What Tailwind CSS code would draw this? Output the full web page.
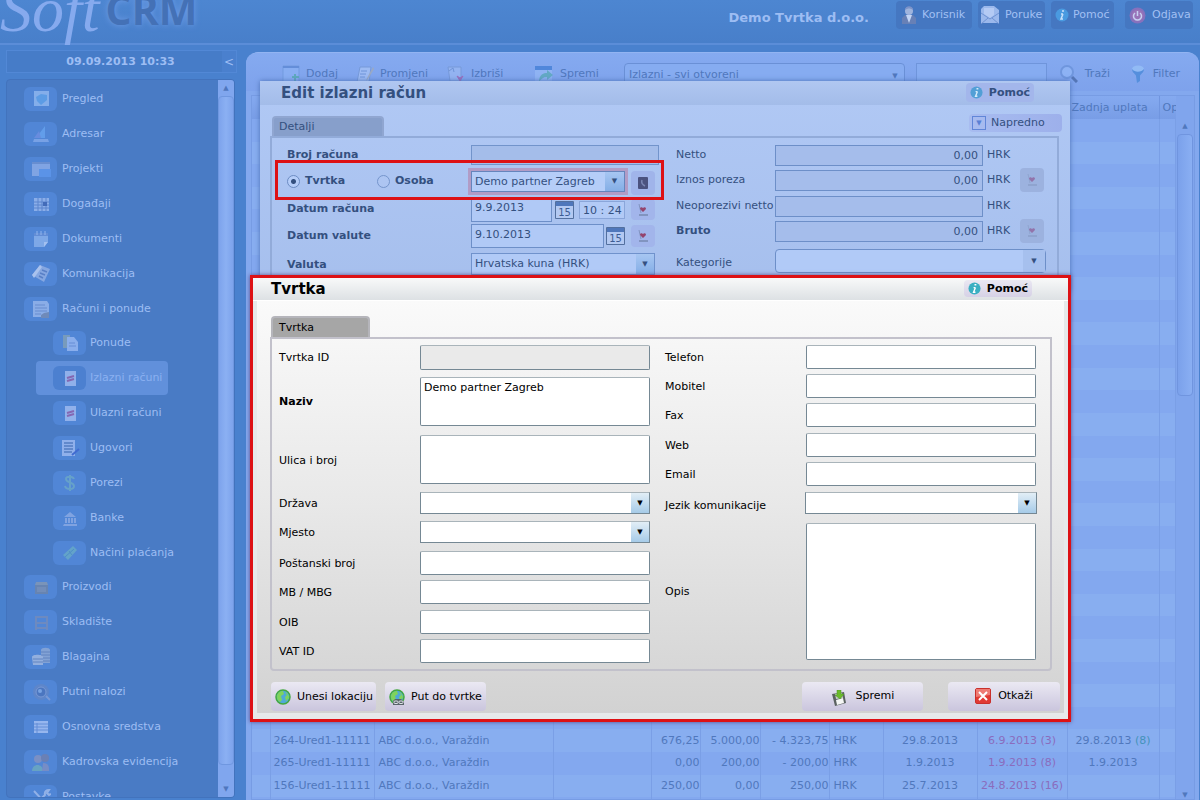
<!DOCTYPE html>
<html lang="hr">
<head>
<meta charset="utf-8">
<title>SoftCRM</title>
<script src="https://cdn.jsdelivr.net/npm/@tailwindcss/browser@4"></script>
</head>
<body class="relative flex h-screen flex-col overflow-hidden bg-[#4981ce] font-['DejaVu_Sans',sans-serif] text-[11px] leading-4">

<header class="flex h-[45px] shrink-0 items-start justify-between border-b-2 border-[#5b8dd8] bg-linear-to-b from-[#4d86d1] to-[#487fca] pr-[7px]">
  <a href="#" class="-mt-5 flex items-start no-underline">
    <span class="font-['Liberation_Serif',serif] text-[64px] leading-[60px] text-[#86aaee] italic">Soft</span>
    <span class="mt-[6px] ml-[6px] font-['Open_Sans',sans-serif] text-[41px] leading-[46px] font-bold text-[#4471b6] [text-shadow:0_0_6px_#6f9ce6]">CRM</span>
  </a>
  <div class="flex items-start">
    <strong class="mt-2 mr-[27px] text-[13px] leading-5 text-[#9dbdf3]">Demo Tvrtka d.o.o.</strong>
    <nav class="mt-px flex gap-[6px] text-[#a2c0f3]">
      <button class="flex h-7 w-[76px] items-center gap-[3px] rounded bg-[#4577c1] pl-[3px]">
        <svg class="size-5" viewBox="0 0 20 20"><path d="M3 19V13l3-3h8l3 3v6z" fill="#6780b6"/><path d="M7 10l3 8 3-8z" fill="#c3d5f5"/><circle cx="10" cy="6" r="4" fill="#9fb4dd"/><path d="M6 5c0-5 8-5 8 0-3-2-5-2-8 0z" fill="#7d93c8"/></svg>Korisnik
      </button>
      <button class="flex h-7 w-[67px] items-center gap-[6px] rounded bg-[#4577c1] pl-[3px]">
        <svg class="h-[18px] w-[18px]" viewBox="0 0 18 18"><path d="M0 3L3 0h10l5 4v13H0z" fill="#9bb8ec"/><path d="M3 2h10v7l-4 3-6-4z" fill="#b4caf4"/><path d="M0 7l9 6 9-6M0 18l7-6M18 18l-7-6" fill="none" stroke="#6f93d3"/></svg>Poruke
      </button>
      <button class="flex h-7 w-[63px] items-center gap-1 rounded bg-[#4577c1] pl-1">
        <svg class="h-[14px] w-[14px]" viewBox="0 0 14 14"><circle cx="7" cy="7" r="6.5" fill="#4a9ae0"/><path d="M7 3h2M8 6l-2 5h2M6 6h2" stroke="#c9e0fa" stroke-width="1.5" fill="none"/></svg>Pomoć
      </button>
      <button class="ml-[5px] flex h-7 w-[68px] items-center gap-[6px] rounded bg-[#4577c1] pl-1">
        <svg class="h-[17px] w-[17px]" viewBox="0 0 17 17"><circle cx="8.500" cy="8.500" r="8" fill="#8671bd"/><circle cx="8.500" cy="8.500" r="6" fill="#9873b8"/><path d="M6 6a4 4 0 1 0 5 0M8.500 4v5" stroke="#c6d0f2" stroke-width="1.500" fill="none"/></svg>Odjava
      </button>
    </nav>
  </div>
</header>

<div class="flex min-h-0 flex-1 gap-[9px] pt-[5px] pl-[6px]">
  <aside class="flex w-[231px] shrink-0 flex-col text-[#9dbdf3]">
    <div class="flex h-[23px] border border-[#5288d6] bg-[#467cc8]">
      <time class="flex-1 pl-3 text-center leading-[22px] font-bold">09.09.2013 10:33</time>
      <button class="w-[14px] bg-[#4a80ce] text-xs">&lt;</button>
    </div>
    <div class="mt-[6px] mr-[2px] mb-[2px] flex min-h-0 flex-1 overflow-hidden rounded border border-[#4273bd] bg-[#497bc5]">
      <ul id="menu" class="grid h-[734px] flex-1 auto-rows-fr pt-[2px]"></ul>
      <div class="flex w-4 flex-col justify-between bg-[#80a6ee] text-center text-[7px] leading-4 text-[#4f76bd]">
        <span>▲</span>
        <div class="w-full flex-1 rounded-sm border border-[#6f97e0] bg-linear-to-r from-[#7da3ec] via-[#8bb0f3] to-[#7da3ec]"></div>
        <span class="h-8 pt-4">▼</span>
      </div>
    </div>
  </aside>

  <main class="mt-[2px] mr-px flex min-w-0 flex-1 flex-col overflow-hidden rounded-t-xl border-t border-[#92b4f2] bg-[#83a8ee] text-[#5078bd]">
    <div class="flex h-[38px] items-center bg-linear-to-b from-[#85aaf0] to-[#7ea2ec] pl-9">
      <button class="mt-1 flex w-[74px] items-center gap-[6px]"><svg class="size-[18px]" viewBox="0 0 18 18"><path d="M1 1h16v16H1z" fill="#88aef2" stroke="#739bdf"/><path d="M1 1h16v2H1z" fill="#648ed9"/><path d="M13 9v7M10 12h7" stroke="#5ea9bd" stroke-width="2"/></svg>Dodaj</button>
      <button class="mt-1 flex w-[90px] items-center gap-[6px]"><svg class="size-[18px]" viewBox="0 0 18 18"><path d="M4 2h11l-2 15H1z" fill="#9dbbf3" stroke="#7699d9"/><path d="M5 6h6M4 9h6M4 12h5" stroke="#6f94d8"/><path d="M17 2l-6 11-1 3 2-2 6-10z" fill="#9aa9c4"/></svg>Promjeni</button>
      <button class="mt-1 flex w-[89px] items-center gap-[7px]"><svg class="size-[18px]" viewBox="0 0 18 18"><path d="M2 2h13v14H4z" fill="#93b3f1" stroke="#7699d9"/><path d="M3 6l4-3 1 4" fill="none" stroke="#6f94d8"/><path d="M11 11l3 2 3-2-3 5z" fill="#9a6fbd" stroke="#9a6fbd"/></svg>Izbriši</button>
      <button class="mt-1 flex w-[89px] items-center gap-[7px]"><svg class="size-[18px]" viewBox="0 0 18 18"><path d="M0 1h17v16H0z" fill="#8fb3f3"/><path d="M0 1h17v4H0z" fill="#5087db"/><path d="M4 17c0-8 5-9 8-9V5l6 5-6 5v-3c-4 0-6 2-8 5z" fill="#63a9c4"/></svg>Spremi</button>
      <div class="relative mt-[6px] h-6 flex-1 rounded-t border border-[#6a90d6] bg-[#86acf1]">
        <select aria-label="Pogled" class="h-full w-full appearance-none bg-transparent px-1 text-[#5078bd]"><option>Izlazni - svi otvoreni</option></select>
        <span class="pointer-events-none absolute top-1 right-[6px] text-[7px]">▼</span>
      </div>
      <input aria-label="Traži" class="mt-[6px] ml-[11px] h-6 w-[131px] border border-[#6f95db] bg-[#86acf1]">
      <button class="mt-[3px] ml-[13px] flex w-[66px] items-center gap-[7px]"><svg class="size-[18px]" viewBox="0 0 18 18"><circle cx="7" cy="7" r="6" fill="#8db2f4" stroke="#6f96dd" stroke-width="2"/><path d="M12 12l5 5" stroke="#5576b6" stroke-width="3"/></svg>Traži</button>
      <button class="mt-[3px] mr-[19px] ml-[5px] flex items-center gap-2"><svg class="h-[18px] w-[14px]" viewBox="0 0 14 18"><ellipse cx="7" cy="4" rx="6" ry="3.500" fill="#92bbf5"/><path d="M1 4c0 4 4 5 4 7l1 7 3-2V11c0-2 4-3 4-7-2 3-9 4-12 0z" fill="#558fdd"/></svg>Filter</button>
    </div>
    <div class="mt-1 mr-1 ml-[5px] flex min-h-0 flex-1 overflow-hidden border border-[#779ce4]">
      <div class="min-w-0 flex-1 overflow-hidden">
        <table class="h-[724px] w-full table-fixed border-collapse whitespace-nowrap">
          <colgroup><col class="w-[18px]"><col class="w-[104px]"><col class="w-[179px]"><col class="w-[98px]"><col class="w-[49px]"><col class="w-[60px]"><col class="w-[69px]"><col class="w-[54px]"><col class="w-[94px]"><col class="w-[90px]"><col class="w-[92px]"><col></colgroup>
          <thead><tr class="h-[23px] bg-linear-to-b from-[#85aaf0] to-[#789de6] text-left"><th></th><th></th><th></th><th></th><th></th><th></th><th></th><th></th><th></th><th></th><th class="border-x border-[#7095df] p-0 pl-1 font-normal">Zadnja uplata</th><th class="overflow-hidden p-0 pl-[3px] font-normal">Op</th></tr></thead>
          <tbody id="rows"></tbody>
        </table>
      </div>
      <div class="flex w-[18px] flex-col bg-[#80a5ed] pt-[22px] text-center text-[7px]">
        <span class="leading-4">▲</span>
        <div class="mx-px h-[262px] rounded-sm border border-[#7095df] bg-linear-to-r from-[#7ba1eb] to-[#8aaff3]"></div>
        <span class="mt-auto leading-2">▼</span>
      </div>
    </div>
  </main>
</div>

<section aria-label="Edit izlazni račun" class="absolute top-[81px] left-[260px] h-[210px] w-[810px] bg-linear-to-b from-[#b1c9f5] to-[#a6bfed] text-[#34507f] shadow-[0_0_5px_#4c70b4]">
  <div class="flex h-6 items-center justify-between bg-linear-to-b from-[#b0c7f1] to-[#a3bce9] pr-9 pl-[21px]">
    <h1 class="text-[15px] leading-6 font-bold">Edit izlazni račun</h1>
    <button class="mb-px flex h-[19px] items-center gap-[6px] rounded-sm bg-[#a3b6eb] px-1 font-bold"><svg class="size-[13px]" viewBox="0 0 14 14"><circle cx="7" cy="7" r="6.5" fill="#529fd6"/><path d="M7 3h2M8 6l-2 5h2M6 6h2" stroke="#d5ebfa" stroke-width="1.5" fill="none"/></svg>Pomoć</button>
  </div>
  <div class="flex items-end justify-between pt-[9px] pr-2 pl-3">
    <button class="h-5 w-[112px] rounded-t border-2 border-b-0 border-[#90a6d1] bg-[#879fcb] pl-[5px] text-left">Detalji</button>
    <button class="mb-1 flex h-[18px] w-[93px] items-center gap-[5px] rounded-sm bg-linear-to-r from-[#a8bcf0] to-[#9db0eb] pl-[3px]"><span class="flex size-[14px] items-center justify-center border border-[#6186d8] text-[7px] text-[#5a80d5]">▼</span>Napredno</button>
  </div>
  <div class="mr-[11px] ml-[10px] flex h-[156px] border-2 border-[#92abd9] pt-[7px]">
    <div class="w-[389px] pl-[15px]">
      <div class="flex h-[26px] items-start"><label for="broj" class="w-[184px] pt-[2px] font-bold">Broj računa</label><input id="broj" disabled class="h-5 w-[188px] border border-[#7294cb] bg-[#a4bdea]"></div>
      <div class="flex h-[26px] items-start">
        <div class="flex w-[184px] items-center pt-[2px] font-bold">
          <label class="flex w-[90px] items-center gap-[5px]"><input type="radio" name="vrsta" checked class="size-[13px] appearance-none rounded-full border border-[#6c8cc3] bg-[radial-gradient(circle,#34507f_2px,#b5cdf8_3px)]">Tvrtka</label>
          <label class="flex items-center gap-[5px]"><input type="radio" name="vrsta" class="size-[13px] appearance-none rounded-full border border-[#7595cc] bg-[#adc5f2]">Osoba</label>
        </div>
        <div class="relative h-[21px] w-[154px] border border-[#6585bd] bg-[#b5cdf8] shadow-[0_0_0_3px_#b19cc6]">
          <select aria-label="Partner" class="h-full w-full appearance-none pl-[3px]"><option>Demo partner Zagreb</option></select>
          <span class="pointer-events-none absolute inset-y-0 right-0 w-[19px] bg-linear-to-b from-[#a7c6f2] to-[#84aee6] text-center text-[7px] leading-[19px]">▼</span>
        </div>
        <button aria-label="Imenik" class="ml-[6px] flex h-6 w-6 items-center justify-center rounded-sm bg-[#a0b4ea]"><svg class="size-3" viewBox="0 0 12 12"><rect x="1" width="10" height="12" rx="1" fill="#4b527f"/><path d="M5 3c-1 3 1 5 3 6" stroke="#7b86b4" fill="none" stroke-width="1.500"/></svg></button>
      </div>
      <div class="flex h-[27px] items-start">
        <label for="datum" class="w-[184px] pt-1 font-bold">Datum računa</label>
        <input id="datum" value="9.9.2013" class="h-[25px] w-[81px] border border-[#6d8fc8] bg-[#b0c9f6] pb-1 pl-[3px]">
        <svg class="mt-1 ml-[3px] h-[18px] w-[19px]" viewBox="0 0 19 18"><path d="M.5.5h18v17H.5z" fill="#b3c9f2" stroke="#53709f"/><path d="M1 1h17v4H1z" fill="#4f77bb"/><text x="9.500" y="15" font-size="10" text-anchor="middle" fill="#3d5c94">15</text></svg>
        <input aria-label="Vrijeme" value="10 : 24" class="mt-1 ml-[5px] h-[18px] w-[46px] border border-[#8aa6da] bg-[#b2caf6] pl-[3px]">
        <button aria-label="Zabilježi datum" class="mt-[2px] ml-[6px] flex h-[21px] w-6 items-center justify-center rounded-sm bg-[#a2b5eb]"><svg class="size-3" viewBox="0 0 12 12"><path d="M2 0l2 9" stroke="#8194c0"/><path d="M6 8L3 5c0-2 2-2 3-1 1-1 3-1 3 1z" fill="#94446f"/><path d="M2 11h9" stroke="#8194c0" stroke-width="2"/></svg></button>
      </div>
      <div class="flex h-[29px] items-start">
        <label for="valute" class="w-[184px] pt-1 font-bold">Datum valute</label>
        <input id="valute" value="9.10.2013" class="h-6 w-[133px] border border-[#6d8fc8] bg-[#b0c9f6] pb-1 pl-[3px]">
        <svg class="mt-[3px] ml-[2px] h-[18px] w-[19px]" viewBox="0 0 19 18"><path d="M.5.5h18v17H.5z" fill="#b3c9f2" stroke="#53709f"/><path d="M1 1h17v4H1z" fill="#4f77bb"/><text x="9.500" y="15" font-size="10" text-anchor="middle" fill="#3d5c94">15</text></svg>
        <button aria-label="Zabilježi valutu" class="mt-px ml-[6px] flex h-[22px] w-6 items-center justify-center rounded-sm bg-[#a2b5eb]"><svg class="size-3" viewBox="0 0 12 12"><path d="M2 0l2 9" stroke="#8194c0"/><path d="M6 8L3 5c0-2 2-2 3-1 1-1 3-1 3 1z" fill="#94446f"/><path d="M2 11h9" stroke="#8194c0" stroke-width="2"/></svg></button>
      </div>
      <div class="flex items-start">
        <label for="valuta" class="w-[184px] pt-1 font-bold">Valuta</label>
        <div class="relative h-[22px] w-[184px] border border-[#7092cc] bg-[#b1caf7]">
          <select id="valuta" class="h-full w-full appearance-none pl-[3px]"><option>Hrvatska kuna (HRK)</option></select>
          <span class="pointer-events-none absolute inset-y-0 right-0 w-[18px] bg-linear-to-b from-[#a7c6f2] to-[#84aee6] text-center text-[7px] leading-[20px]">▼</span>
        </div>
      </div>
    </div>
    <div class="flex-1 pl-[15px]">
      <div class="flex h-[25px] items-start"><label for="netto" class="w-[99px] pt-[2px]">Netto</label><input id="netto" value="0,00" readonly class="h-[21px] w-[208px] border border-[#6d8fc8] bg-[#a5bdeb] pr-1 text-right"><span class="ml-1 pt-[2px]">HRK</span></div>
      <div class="flex h-[26px] items-start"><label for="porez" class="w-[99px] pt-[2px]">Iznos poreza</label><input id="porez" value="0,00" readonly class="h-[21px] w-[208px] border border-[#6d8fc8] bg-[#a5bdeb] pr-1 text-right"><span class="ml-1 w-[33px] pt-[2px]">HRK</span><button aria-label="Preračunaj porez" class="-mt-[2px] flex size-6 items-center justify-center rounded-sm bg-[#9cb2df]"><svg class="size-3" viewBox="0 0 12 12"><path d="M2 0l2 9" stroke="#8fa4cf"/><path d="M6 8L3 5c0-2 2-2 3-1 1-1 3-1 3 1z" fill="#9274ab"/><path d="M2 11h9" stroke="#8fa4cf" stroke-width="2"/></svg></button></div>
      <div class="flex h-[25px] items-start"><label for="neop" class="w-[99px] pt-[2px] whitespace-nowrap">Neoporezivi netto</label><input id="neop" readonly class="h-[21px] w-[208px] border border-[#6d8fc8] bg-[#a5bdeb]"><span class="ml-1 pt-[2px]">HRK</span></div>
      <div class="flex h-7 items-start"><label for="bruto" class="w-[99px] pt-[2px] font-bold">Bruto</label><input id="bruto" value="0,00" readonly class="h-[21px] w-[208px] border border-[#6d8fc8] bg-[#a5bdeb] pr-1 text-right"><span class="ml-1 w-[33px] pt-[2px]">HRK</span><button aria-label="Preračunaj bruto" class="-mt-[2px] flex size-6 items-center justify-center rounded-sm bg-[#9cb2df]"><svg class="size-3" viewBox="0 0 12 12"><path d="M2 0l2 9" stroke="#8fa4cf"/><path d="M6 8L3 5c0-2 2-2 3-1 1-1 3-1 3 1z" fill="#9274ab"/><path d="M2 11h9" stroke="#8fa4cf" stroke-width="2"/></svg></button></div>
      <div class="flex items-start"><label for="kat" class="w-[99px] pt-[6px]">Kategorije</label>
        <div class="relative h-6 w-[271px] rounded-sm border border-[#6d8fc8] bg-[#b1caf7]"><select id="kat" class="h-full w-full appearance-none"><option></option></select><span class="pointer-events-none absolute inset-y-0 right-0 w-[22px] bg-[#a6c0ee] text-center text-[7px] leading-[22px]">▼</span></div>
      </div>
    </div>
  </div>
</section>

<div class="pointer-events-none absolute top-[160px] left-[275px] h-10 w-[389px] border-3 border-[#dd1115]"></div>

<section aria-label="Tvrtka" class="absolute top-[275px] left-[250px] w-[821px] border-3 border-[#dd1115] bg-[#e6e9ea] text-black shadow-[0_0_4px_#5b4a86]">
  <div class="flex h-[23px] items-center justify-between border-b border-white bg-linear-to-b from-[#f8f9f9] to-[#dde1e4] pr-9 pl-[18px]">
    <h2 class="text-[15px] leading-[22px] font-bold">Tvrtka</h2>
    <button class="mb-px flex h-[17px] items-center gap-[6px] rounded-sm bg-linear-to-b from-[#eae8f2] to-[#d6d1e6] px-1 font-bold"><svg class="size-[13px]" viewBox="0 0 14 14"><circle cx="7" cy="7" r="6.5" fill="#3aafc2"/><path d="M7 3h2M8 6l-2 5h2M6 6h2" stroke="#fff" stroke-width="1.5" fill="none"/></svg>Pomoć</button>
  </div>
  <form class="mx-1 mb-[6px] bg-linear-to-b from-[#fafafa] via-[#e8e8e8] to-[#d2d2d2] px-[14px] pt-[15px] pb-[2px]">
    <button type="button" class="block h-[21px] w-[99px] rounded-t border-2 border-b-0 border-[#b5b5bb] bg-[#a6a6a6] pl-[6px] text-left">Tvrtka</button>
    <div class="-ml-px flex w-[782px] justify-between rounded-b border-2 border-[#c2c1cb] pt-[6px] pr-[14px] pb-[6px] pl-[7px]">
      <div>
        <div class="flex h-8 items-start"><label for="f1" class="w-[141px] pt-[5px]">Tvrtka ID</label><input id="f1" disabled class="h-[25px] w-[230px] rounded-xs border border-[#758894] border-t-[#a9b4ba] bg-[#eaeaea]"></div>
        <div class="flex h-[58px] items-start"><label for="f2" class="w-[141px] pt-[17px] font-bold">Naziv</label><textarea id="f2" class="block h-[49px] w-[230px] resize-none rounded-xs border border-[#758894] border-t-[#a9b4ba] bg-white px-[3px] pt-[2px]">Demo partner Zagreb</textarea></div>
        <div class="flex h-[57px] items-start"><label for="f3" class="w-[141px] pt-[18px]">Ulica i broj</label><textarea id="f3" class="block h-[49px] w-[230px] resize-none rounded-xs border border-[#758894] border-t-[#a9b4ba] bg-white"></textarea></div>
        <div class="flex h-[29px] items-start"><label for="f4" class="w-[141px] pt-1">Država</label><div class="relative h-[22px] w-[230px] border border-[#758894] border-t-[#a9b4ba] bg-white"><select id="f4" class="h-full w-full appearance-none"><option></option></select><span class="pointer-events-none absolute inset-y-0 right-0 w-[18px] bg-linear-to-b from-[#e2eef6] to-[#a6cbe8] text-center text-[7px] leading-[20px]">▼</span></div></div>
        <div class="flex h-[30px] items-start"><label for="f5" class="w-[141px] pt-1">Mjesto</label><div class="relative h-[22px] w-[230px] border border-[#758894] border-t-[#a9b4ba] bg-white"><select id="f5" class="h-full w-full appearance-none"><option></option></select><span class="pointer-events-none absolute inset-y-0 right-0 w-[18px] bg-linear-to-b from-[#e2eef6] to-[#a6cbe8] text-center text-[7px] leading-[20px]">▼</span></div></div>
        <div class="flex h-[29px] items-start"><label for="f6" class="w-[141px] pt-[5px]">Poštanski broj</label><input id="f6" class="h-6 w-[230px] rounded-xs border border-[#758894] border-t-[#a9b4ba] bg-white"></div>
        <div class="flex h-[30px] items-start"><label for="f7" class="w-[141px] pt-[5px]">MB / MBG</label><input id="f7" class="h-6 w-[230px] rounded-xs border border-[#758894] border-t-[#a9b4ba] bg-white"></div>
        <div class="flex h-[29px] items-start"><label for="f8" class="w-[141px] pt-[5px]">OIB</label><input id="f8" class="h-6 w-[230px] rounded-xs border border-[#758894] border-t-[#a9b4ba] bg-white"></div>
        <div class="flex items-start"><label for="f9" class="w-[141px] pt-[5px]">VAT ID</label><input id="f9" class="h-6 w-[230px] rounded-xs border border-[#758894] border-t-[#a9b4ba] bg-white"></div>
      </div>
      <div>
        <div class="flex h-[29px] items-start"><label for="g1" class="w-[141px] pt-[5px]">Telefon</label><input id="g1" class="h-6 w-[230px] rounded-xs border border-[#758894] border-t-[#a9b4ba] bg-white"></div>
        <div class="flex h-[29px] items-start"><label for="g2" class="w-[141px] pt-[5px]">Mobitel</label><input id="g2" class="h-6 w-[230px] rounded-xs border border-[#758894] border-t-[#a9b4ba] bg-white"></div>
        <div class="flex h-[30px] items-start"><label for="g3" class="w-[141px] pt-[5px]">Fax</label><input id="g3" class="h-6 w-[230px] rounded-xs border border-[#758894] border-t-[#a9b4ba] bg-white"></div>
        <div class="flex h-[29px] items-start"><label for="g4" class="w-[141px] pt-[5px]">Web</label><input id="g4" class="h-6 w-[230px] rounded-xs border border-[#758894] border-t-[#a9b4ba] bg-white"></div>
        <div class="flex h-[30px] items-start"><label for="g5" class="w-[141px] pt-[5px]">Email</label><input id="g5" class="h-6 w-[230px] rounded-xs border border-[#758894] border-t-[#a9b4ba] bg-white"></div>
        <div class="flex h-[31px] items-start"><label for="g6" class="w-[140px] pt-[6px]">Jezik komunikacije</label><div class="relative -mr-px h-[22px] w-[232px] border border-[#758894] border-t-[#a9b4ba] bg-white"><select id="g6" class="h-full w-full appearance-none"><option></option></select><span class="pointer-events-none absolute inset-y-0 right-0 w-[18px] bg-linear-to-b from-[#e2eef6] to-[#a6cbe8] text-center text-[7px] leading-[20px]">▼</span></div></div>
        <div class="flex items-center"><label for="g7" class="w-[141px]">Opis</label><textarea id="g7" class="block h-[137px] w-[230px] resize-none rounded-xs border border-[#758894] border-t-[#a9b4ba] bg-white"></textarea></div>
      </div>
    </div>
    <div class="-mr-[10px] mt-[11px] flex h-[29px]">
      <button type="button" class="flex w-[105px] items-center gap-[6px] rounded-sm bg-linear-to-b from-[#ebe9f3] to-[#cac5dd] pl-1 whitespace-nowrap"><svg class="size-4 shrink-0" viewBox="0 0 16 16"><circle cx="8" cy="8" r="7" fill="#4fa9d8" stroke="#43a83f" stroke-width="1.500"/><path d="M2 8c0-4 3-6 6-6l1 3-3 2 1 4-2 2c-2-1-3-3-3-5zM10 3c3 1 4 4 4 6l-3 3-1-4 2-2z" fill="#7fd45c"/></svg>Unesi lokaciju</button>
      <button type="button" class="ml-[9px] flex w-[101px] items-center gap-[6px] rounded-sm bg-linear-to-b from-[#ebe9f3] to-[#cac5dd] pl-1 whitespace-nowrap"><svg class="size-4 shrink-0" viewBox="0 0 16 16"><circle cx="8" cy="8" r="7" fill="#4fa9d8" stroke="#43a83f" stroke-width="1.500"/><path d="M2 8c0-4 3-6 6-6l1 3-3 2 1 4-2 2c-2-1-3-3-3-5zM10 3c3 1 4 4 4 6l-3 2-1-3 2-2z" fill="#7fd45c"/><path d="M4 16v-4l2-2h6l3 3v3z" fill="#59636a"/><rect x="5" y="12" width="4" height="2.500" rx="1" fill="none" stroke="#dde3e6"/><rect x="10" y="12" width="4" height="2.500" rx="1" fill="none" stroke="#dde3e6"/></svg>Put do tvrtke</button>
      <button type="button" class="ml-auto flex w-[121px] items-center justify-center gap-[9px] rounded-sm bg-linear-to-b from-[#ebe9f3] to-[#cac5dd] pb-[2px]"><svg class="mt-1 size-4" viewBox="0 0 16 16"><path d="M1 4l12-2 2 11-11 3z" fill="#5b6260"/><path d="M4 4l7-1 1 5-7 1z" fill="#c9ceca"/><path d="M5 10l7-2 1 5-7 2z" fill="#f4f6f4"/><path d="M6 0h4v4h3L9 9 4 5h2z" fill="#6cbb2b" stroke="#4b9420" stroke-width=".5"/></svg>Spremi</button>
      <button type="button" class="ml-[25px] flex w-[112px] items-center justify-center gap-[7px] rounded-sm bg-linear-to-b from-[#ebe9f3] to-[#cac5dd] pb-[2px]"><svg class="mt-px size-4" viewBox="0 0 16 16"><rect x=".5" y=".5" width="15" height="15" rx="1.500" fill="#e13a34" stroke="#c9302c"/><path d="M1 1h14v6L1 9z" fill="#ee7b74"/><path d="M4 4l8 8M12 4l-8 8" stroke="#fff" stroke-width="2"/></svg>Otkaži</button>
    </div>
  </form>
</section>

<script>
  const menu = [
    ['Pregled', '<path d="M3 2h15v15H3z" fill="#8db5ee"/><path d="M5 8l5-3 6 1v5l-6 5-4-4z" fill="#5fa1e8"/>'],
    ['Adresar', '<path d="M3 15h14l1 3H2z" fill="#7fa6e8"/><path d="M5 14L14 2v12z" fill="#65a2ee"/><path d="M3 14l5-7 2 7z" fill="#6d8ee0"/>'],
    ['Projekti', '<path d="M1 3h18v14H1z" fill="#89aae6"/><path d="M1 3h18v2H1z" fill="#6d90cf"/><path d="M8 10h12v8H8z" fill="#5d96ea"/>'],
    ['Događaji', '<path d="M3 4h15v13H3z" fill="#95b5ed"/><path d="M3 8h15M3 11h15M3 14h15M7 4v13M11 4v13M15 4v13" stroke="#5c85cc"/><path d="M12 8h4v4h-4z" fill="#4168b4"/>'],
    ['Dokumenti', '<path d="M3 4h14v9l-4 5H3z" fill="#87aeeb"/><path d="M3 4h14v3H3z" fill="#668fd6"/><path d="M6 2v4M10 2v4M14 2v4" stroke="#9dbdf3"/><path d="M13 18v-5h4z" fill="#b2cbf5"/>'],
    ['Komunikacija', '<path d="M1 11L9 1l10 4-6 13z" fill="#8fade4"/><path d="M1 11L9 1l2 2-8 11z" fill="#b9cdf2"/><path d="M9 9l5 2M11 6l5 2M8 12l4 2" stroke="#5b7fc4" stroke-width="1.500"/>'],
    ['Računi i ponude', '<path d="M2 2h14l2 3v13H2z" fill="#95b4ea"/><path d="M4 6h10M4 9h12M4 12h12M4 15h6" stroke="#6b8fd0"/><path d="M10 16l3-2 5-1v6h-8z" fill="#758bb5"/>'],
    ['Ponude', '<path d="M3 2h7v13H3z" fill="#7f9fb8"/><path d="M7 4h7l4 5v9H7z" fill="#94b5f0"/><path d="M9 10h6M9 13h7" stroke="#6b90d7"/>', 1],
    ['Izlazni računi', '<path d="M5 3h11v15H5z" fill="#9db9ef"/><path d="M7 10l7-2M7 13l7-2" stroke="#8e62ac" stroke-width="2"/>', 1, 1],
    ['Ulazni računi', '<path d="M5 3h11v15H5z" fill="#9db9ef"/><path d="M7 10l7-2M7 13l7-2" stroke="#8e62ac" stroke-width="2"/>', 1],
    ['Ugovori', '<path d="M2 2h13v16H2z" fill="#9bb8ef"/><path d="M4 5h9M4 8h9M4 11h9M4 14h8" stroke="#567bc0" stroke-width="1.500"/><path d="M19 11l-7 6" stroke="#3f67d0" stroke-width="2"/>', 1],
    ['Porezi', '<path d="M14 6c-1-3-8-3-8 0 0 4 8 3 8 7 0 4-8 4-9 0M10 2v16" fill="none" stroke="#6aa6c8" stroke-width="2"/>', 1],
    ['Banke', '<path d="M4 9l6-5 6 5zM4 16h13v2H3zM5 10h2v5H5zM8 10h2v5H8zM11 10h2v5h-2zM14 10h2v5h-2z" fill="#89a9e3"/>', 1],
    ['Načini plaćanja', '<path d="M3 12L13 3l4 4L8 17z" fill="#67a9c8"/><path d="M5 14l9-8M9 8l3 4" stroke="#4f90c4"/>', 1],
    ['Proizvodi', '<path d="M5 5h11l1 3H4z" fill="#8297b4"/><path d="M4 8h13v9H4z" fill="#6c84ab"/><path d="M6 10h9v5H6z" fill="#788fb4"/>'],
    ['Skladište', '<path d="M5 4v14M16 4v14M5 5h11M5 11h11M5 16h11" stroke="#728bbd" stroke-width="2" fill="none"/>'],
    ['Blagajna', '<path d="M10 3c0-3 9-3 9 0v13h-9z" fill="#8ba7d5"/><path d="M1 10c0-3 11-3 11 0v8H2z" fill="#9fb7e0"/><path d="M10 5h9M10 8h9M12 11h7M12 14h7M2 12h10M2 15h10" stroke="#6484bd"/>'],
    ['Putni nalozi', '<circle cx="10" cy="10" r="8" fill="#6186c8"/><circle cx="10" cy="10" r="5" fill="#4b74bd" stroke="#7f9dd6"/><circle cx="9" cy="9" r="2" fill="#7fa9e6"/><path d="M15 14l4 4" stroke="#7f9dd6" stroke-width="2"/>'],
    ['Osnovna sredstva', '<path d="M3 4h14v12H3z" fill="#a3bff3"/><path d="M3 7h14M3 10h14M3 13h14M6 6v10" stroke="#668fd8"/>'],
    ['Kadrovska evidencija', '<circle cx="7" cy="7" r="4" fill="#8392c2"/><circle cx="14" cy="6" r="4" fill="#6f7fb0"/><path d="M1 19c0-8 11-8 11 0z" fill="#6ba9c0"/><path d="M11 19l1-8c6 0 6 4 6 8z" fill="#7d8fc4"/>'],
    ['Postavke', '<path d="M3 4l12 13M4 17L14 8c-1-4 2-5 4-5l-2 3 2 2 2-1" fill="none" stroke="#9db9ea" stroke-width="2"/>']
  ];
  document.getElementById('menu').innerHTML = menu.map(([t, svg, sub, on]) => `
    <li class="flex min-h-0 items-center ${sub ? 'pl-[29px]' : 'pl-[17px]'}">
      <a href="#" class="flex items-center ${sub ? 'h-[34px] gap-1 rounded-sm pr-[6px] pl-[17px]' : 'gap-[5px]'} ${on ? 'bg-[#6190db] text-[#8bb0f1]' : ''}">
        <span class="flex h-6 w-[33px] items-center justify-center rounded-md ${on ? 'bg-[#4c80d0]' : 'bg-[#5186d6]'}"><svg class="size-5 opacity-85" viewBox="0 0 20 20">${svg}</svg></span>${t}
      </a>
    </li>`).join('');

  const data = {
    27: ['264-Ured1-11111', '676,25', '5.000,00', '- 4.323,75', '29.8.2013', '6.9.2013 (3)', '29.8.2013 <span class="text-[#4493ba]">(8)</span>'],
    28: ['265-Ured1-11111', '0,00', '200,00', '- 200,00', '1.9.2013', '1.9.2013 (8)', '1.9.2013'],
    29: ['156-Ured1-11111', '250,00', '0,00', '250,00', '25.7.2013', '24.8.2013 (16)', '']
  };
  let html = '';
  for (let i = 0; i < 31; i++) {
    const d = data[i] || ['', '', '', '', '', '', ''];
    const has = i in data;
    html += `<tr class="${i % 2 ? 'bg-[#88aef0]' : 'bg-[#83a8ef]'} *:border-r *:border-[#7a9fe6] *:p-0">
      <td></td><td class="text-center">${d[0]}</td><td><span class="pl-1">${has ? 'ABC d.o.o., Varaždin' : ''}</span></td><td></td>
      <td class="text-right">${d[1]}</td><td class="text-right">${d[2]}</td><td class="text-right">${d[3]}</td><td><span class="pl-1">${has ? 'HRK' : ''}</span></td>
      <td class="text-center">${d[4]}</td><td class="text-center text-[#8a6cbd]">${d[5]}</td><td class="text-center">${d[6]}</td><td></td></tr>`;
  }
  document.getElementById('rows').innerHTML = html;
</script>
</body>
</html>
